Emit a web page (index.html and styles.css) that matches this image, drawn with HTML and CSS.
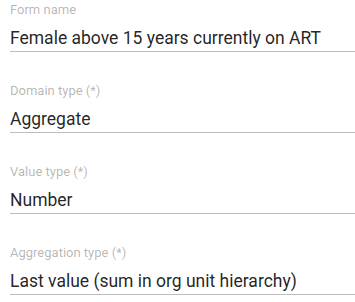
FILE: index.html
```html
<!DOCTYPE html>
<html lang="en">
<head>
  <meta charset="UTF-8">
  <title>Data element</title>
  <link rel="stylesheet" href="styles.css">
</head>
<body>
  <div class="form">
    <div class="campo">
      <label>Form name</label>
      <div class="valor">Female above 15 years currently on ART</div>
    </div>
    <div class="campo">
      <label>Domain type (*)</label>
      <div class="valor">Aggregate</div>
    </div>
    <div class="campo">
      <label>Value type (*)</label>
      <div class="valor">Number</div>
    </div>
    <div class="campo">
      <label>Aggregation type (*)</label>
      <div class="valor">Last value (sum in org unit hierarchy)</div>
    </div>
  </div>
</body>
</html>
```
FILE: styles.css
```css
body {
  margin: 0;
  font-family: Roboto, "Noto Sans", sans-serif;
  background-color: #ffffff;
}

.form {
  padding: 2px 0 0 10px;
}

.campo {
  height: 81px;
}

.campo:last-child {
  height: auto;
}

.campo label {
  display: block;
  font-size: 13px;
  line-height: 16px;
  color: rgba(0, 0, 0, 0.3);
}

.campo .valor {
  margin-top: 9px;
  font-size: 17.5px;
  line-height: 22px;
  color: rgba(0, 0, 0, 0.87);
  padding-bottom: 2px;
  border-bottom: 1px solid #bdbdbd;
}
```
